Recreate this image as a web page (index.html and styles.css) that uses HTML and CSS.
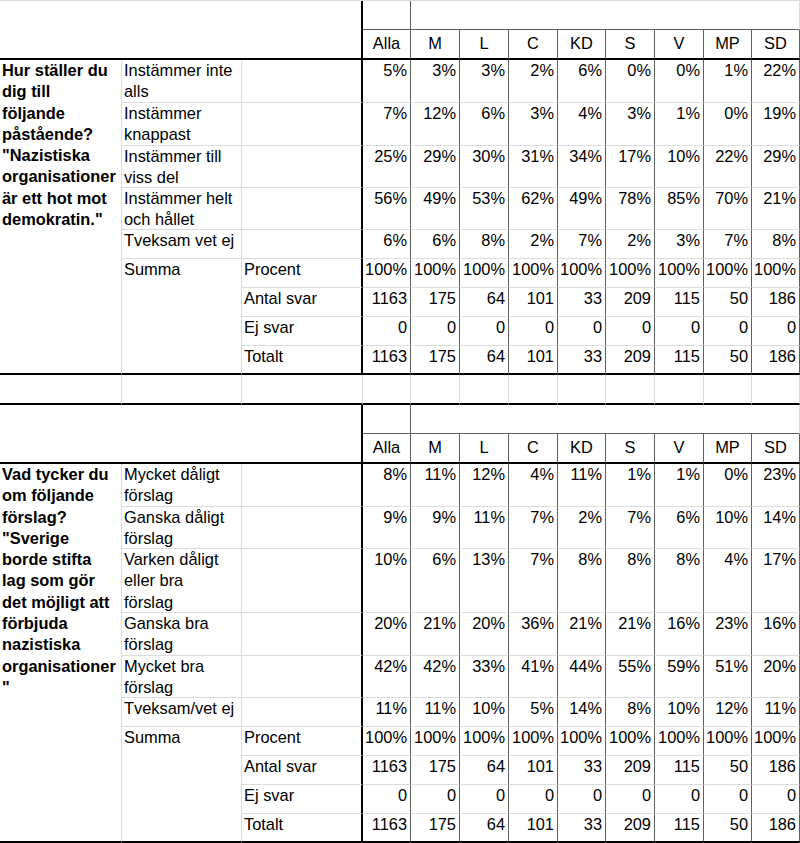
FILE: index.html
```html
<!DOCTYPE html>
<html lang="sv">
<head>
<meta charset="utf-8">
<title>Tabell</title>
<link rel="stylesheet" href="styles.css">
</head>
<body>
<section class="sheet t1">
  <div class="cell corner"></div>
  <div class="cell hd1"></div>
  <div class="cell hdwide"></div>
  <div class="cell hd">Alla</div><div class="cell hd">M</div><div class="cell hd">L</div><div class="cell hd">C</div><div class="cell hd">KD</div><div class="cell hd">S</div><div class="cell hd">V</div><div class="cell hd">MP</div><div class="cell hd">SD</div>

  <div class="cell q q1">Hur ställer du<br>dig till<br>följande<br>påstående?<br>"Nazistiska<br>organisationer<br>är ett hot mot<br>demokratin."</div>
  <div class="cell">Instämmer inte<br>alls</div><div class="cell sep"></div>
  <div class="cell num">5%</div><div class="cell num">3%</div><div class="cell num">3%</div><div class="cell num">2%</div><div class="cell num">6%</div><div class="cell num">0%</div><div class="cell num">0%</div><div class="cell num">1%</div><div class="cell num">22%</div>

  <div class="cell">Instämmer<br>knappast</div><div class="cell sep"></div>
  <div class="cell num">7%</div><div class="cell num">12%</div><div class="cell num">6%</div><div class="cell num">3%</div><div class="cell num">4%</div><div class="cell num">3%</div><div class="cell num">1%</div><div class="cell num">0%</div><div class="cell num">19%</div>

  <div class="cell">Instämmer till<br>viss del</div><div class="cell sep"></div>
  <div class="cell num">25%</div><div class="cell num">29%</div><div class="cell num">30%</div><div class="cell num">31%</div><div class="cell num">34%</div><div class="cell num">17%</div><div class="cell num">10%</div><div class="cell num">22%</div><div class="cell num">29%</div>

  <div class="cell">Instämmer helt<br>och hållet</div><div class="cell sep"></div>
  <div class="cell num">56%</div><div class="cell num">49%</div><div class="cell num">53%</div><div class="cell num">62%</div><div class="cell num">49%</div><div class="cell num">78%</div><div class="cell num">85%</div><div class="cell num">70%</div><div class="cell num">21%</div>

  <div class="cell">Tveksam vet ej</div><div class="cell sep"></div>
  <div class="cell num">6%</div><div class="cell num">6%</div><div class="cell num">8%</div><div class="cell num">2%</div><div class="cell num">7%</div><div class="cell num">2%</div><div class="cell num">3%</div><div class="cell num">7%</div><div class="cell num">8%</div>

  <div class="cell summa">Summa</div>
  <div class="cell sep">Procent</div>
  <div class="cell num">100%</div><div class="cell num">100%</div><div class="cell num">100%</div><div class="cell num">100%</div><div class="cell num">100%</div><div class="cell num">100%</div><div class="cell num">100%</div><div class="cell num">100%</div><div class="cell num">100%</div>

  <div class="cell sep">Antal svar</div>
  <div class="cell num">1163</div><div class="cell num">175</div><div class="cell num">64</div><div class="cell num">101</div><div class="cell num">33</div><div class="cell num">209</div><div class="cell num">115</div><div class="cell num">50</div><div class="cell num">186</div>

  <div class="cell sep">Ej svar</div>
  <div class="cell num">0</div><div class="cell num">0</div><div class="cell num">0</div><div class="cell num">0</div><div class="cell num">0</div><div class="cell num">0</div><div class="cell num">0</div><div class="cell num">0</div><div class="cell num">0</div>

  <div class="cell sep last">Totalt</div>
  <div class="cell num last">1163</div><div class="cell num last">175</div><div class="cell num last">64</div><div class="cell num last">101</div><div class="cell num last">33</div><div class="cell num last">209</div><div class="cell num last">115</div><div class="cell num last">50</div><div class="cell num last">186</div>
</section>

<div class="sheet spacer">
  <div class="cell"></div><div class="cell"></div><div class="cell"></div><div class="cell"></div><div class="cell"></div><div class="cell"></div><div class="cell"></div><div class="cell"></div><div class="cell"></div><div class="cell"></div><div class="cell"></div><div class="cell"></div>
</div>

<section class="sheet t2">
  <div class="cell corner"></div>
  <div class="cell hd1"></div>
  <div class="cell hdwide"></div>
  <div class="cell hd">Alla</div><div class="cell hd">M</div><div class="cell hd">L</div><div class="cell hd">C</div><div class="cell hd">KD</div><div class="cell hd">S</div><div class="cell hd">V</div><div class="cell hd">MP</div><div class="cell hd">SD</div>

  <div class="cell q q2">Vad tycker du<br>om följande<br>förslag?<br>"Sverige<br>borde stifta<br>lag som gör<br>det möjligt att<br>förbjuda<br>nazistiska<br>organisationer<br>"</div>
  <div class="cell">Mycket dåligt<br>förslag</div><div class="cell sep"></div>
  <div class="cell num">8%</div><div class="cell num">11%</div><div class="cell num">12%</div><div class="cell num">4%</div><div class="cell num">11%</div><div class="cell num">1%</div><div class="cell num">1%</div><div class="cell num">0%</div><div class="cell num">23%</div>

  <div class="cell">Ganska dåligt<br>förslag</div><div class="cell sep"></div>
  <div class="cell num">9%</div><div class="cell num">9%</div><div class="cell num">11%</div><div class="cell num">7%</div><div class="cell num">2%</div><div class="cell num">7%</div><div class="cell num">6%</div><div class="cell num">10%</div><div class="cell num">14%</div>

  <div class="cell">Varken dåligt<br>eller bra<br>förslag</div><div class="cell sep"></div>
  <div class="cell num">10%</div><div class="cell num">6%</div><div class="cell num">13%</div><div class="cell num">7%</div><div class="cell num">8%</div><div class="cell num">8%</div><div class="cell num">8%</div><div class="cell num">4%</div><div class="cell num">17%</div>

  <div class="cell">Ganska bra<br>förslag</div><div class="cell sep"></div>
  <div class="cell num">20%</div><div class="cell num">21%</div><div class="cell num">20%</div><div class="cell num">36%</div><div class="cell num">21%</div><div class="cell num">21%</div><div class="cell num">16%</div><div class="cell num">23%</div><div class="cell num">16%</div>

  <div class="cell">Mycket bra<br>förslag</div><div class="cell sep"></div>
  <div class="cell num">42%</div><div class="cell num">42%</div><div class="cell num">33%</div><div class="cell num">41%</div><div class="cell num">44%</div><div class="cell num">55%</div><div class="cell num">59%</div><div class="cell num">51%</div><div class="cell num">20%</div>

  <div class="cell">Tveksam/vet ej</div><div class="cell sep"></div>
  <div class="cell num">11%</div><div class="cell num">11%</div><div class="cell num">10%</div><div class="cell num">5%</div><div class="cell num">14%</div><div class="cell num">8%</div><div class="cell num">10%</div><div class="cell num">12%</div><div class="cell num">11%</div>

  <div class="cell summa">Summa</div>
  <div class="cell sep">Procent</div>
  <div class="cell num">100%</div><div class="cell num">100%</div><div class="cell num">100%</div><div class="cell num">100%</div><div class="cell num">100%</div><div class="cell num">100%</div><div class="cell num">100%</div><div class="cell num">100%</div><div class="cell num">100%</div>

  <div class="cell sep">Antal svar</div>
  <div class="cell num">1163</div><div class="cell num">175</div><div class="cell num">64</div><div class="cell num">101</div><div class="cell num">33</div><div class="cell num">209</div><div class="cell num">115</div><div class="cell num">50</div><div class="cell num">186</div>

  <div class="cell sep">Ej svar</div>
  <div class="cell num">0</div><div class="cell num">0</div><div class="cell num">0</div><div class="cell num">0</div><div class="cell num">0</div><div class="cell num">0</div><div class="cell num">0</div><div class="cell num">0</div><div class="cell num">0</div>

  <div class="cell sep last">Totalt</div>
  <div class="cell num last">1163</div><div class="cell num last">175</div><div class="cell num last">64</div><div class="cell num last">101</div><div class="cell num last">33</div><div class="cell num last">209</div><div class="cell num last">115</div><div class="cell num last">50</div><div class="cell num last">186</div>
</section>
</body>
</html>
```
FILE: styles.css
```css
:root {
  --light: #dcdcdc;
  --dark: #606060;
  --thick: #000000;
}

html, body {
  margin: 0;
  padding: 0;
  background: #ffffff;
}

body {
  width: 800px;
  font-family: "Liberation Sans", Arial, sans-serif;
  font-size: 16.4px;
  color: #000000;
}

.sheet {
  display: grid;
  grid-template-columns: 122px 120px 121px 48px 49px 49px 49px 48px 49px 49px 48px 48px;
  width: 800px;
}

.t1 {
  border-top: 1px solid var(--light);
  grid-template-rows: 29px 30px 43px 43px 42px 42px 29px 29px 29px 29px 29px;
}

.spacer {
  grid-template-rows: 30px;
}

.t2 {
  grid-template-rows: 29px 30px 43px 42px 64px 43px 42px 29px 29px 29px 29px 29px;
}

.cell {
  box-sizing: border-box;
  min-width: 0;
  overflow: hidden;
  white-space: nowrap;
  padding: 0 2px;
  line-height: 21.3px;
  border-right: 1px solid var(--light);
  border-bottom: 1px solid var(--light);
}

.spacer .cell {
  border-bottom: 2px solid var(--thick);
}

.corner {
  grid-column: span 3;
  grid-row: span 2;
  border-right: 2px solid var(--thick);
  border-bottom: 2px solid var(--thick);
}

.hd1 {
  border-right-color: var(--dark);
  border-bottom-color: var(--dark);
}

.hdwide {
  grid-column: span 8;
  border-bottom-color: var(--dark);
}

.hd {
  display: flex;
  align-items: center;
  justify-content: center;
  border-right-color: var(--dark);
  border-bottom: 2px solid var(--thick);
}

.q {
  font-weight: bold;
  border-bottom: 2px solid var(--thick);
}

.q1 {
  grid-row: span 9;
}

.q2 {
  grid-row: span 10;
}

.summa {
  grid-row: span 4;
  border-bottom: 2px solid var(--thick);
}

.sep {
  border-right: 2px solid var(--thick);
}

.num {
  text-align: right;
  padding-right: 3px;
  border-right-color: var(--dark);
}

.last {
  border-bottom: 2px solid var(--thick);
}
```
